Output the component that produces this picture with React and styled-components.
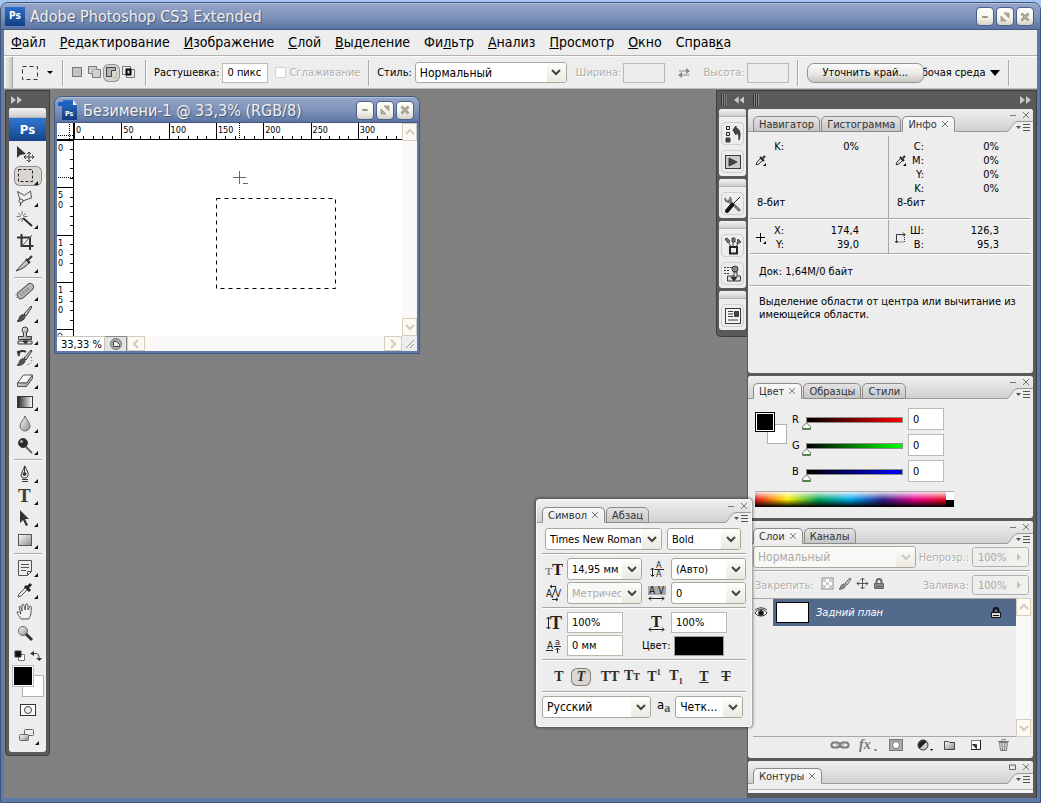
import React, { useState } from "react";
import styled, { createGlobalStyle, css } from "styled-components";

const sans = `"DejaVu Sans Condensed", "DejaVu Sans", sans-serif`;
const serif = `"Liberation Serif", serif`;

const GlobalStyle = createGlobalStyle`
  * {
    box-sizing: border-box;
  }
  body {
    margin: 0;
    font-family: ${sans};
    font-size: 11px;
    color: #000;
  }
  button, input, select {
    font: inherit;
    color: inherit;
    margin: 0;
  }
  button {
    padding: 0;
    border: 0;
    background: none;
  }
`;

/* ---------- window frame ---------- */

const Desktop = styled.div`
  min-height: 100vh;
  display: flex;
  flex-direction: column;
  padding-top: 2px;
  background: #a6c4ec;
`;

const Frame = styled.div`
  flex: 1;
  display: flex;
  flex-direction: column;
  padding: 0 3px 4px;
  border: 1px solid #3f5580;
  border-radius: 8px 8px 0 0;
  background: #5e78a8;
`;

const TitleBar = styled.header`
  display: flex;
  align-items: center;
  height: 27px;
  margin: 0 -3px;
  padding: 0 6px 0 4px;
  border-top: 1px solid #b4c2da;
  border-bottom: 1px solid #43597f;
  border-radius: 7px 7px 0 0;
  background: linear-gradient(#93a5c6, #8094ba 50%, #5b74a3);
`;

const Title = styled.h1`
  flex: 1;
  margin: 0 0 0 5px;
  font-size: 16px;
  font-weight: normal;
  white-space: nowrap;
  color: #f3f1ea;
  text-shadow: 1px 1px 1px #3f5580;
`;

const WindowButtons = styled.div`
  display: flex;
  gap: 2px;
`;

const WindowButton = styled.button`
  display: flex;
  align-items: center;
  justify-content: center;
  width: 18px;
  height: 19px;
  border: 1px solid #4a6190;
  border-radius: 4px;
  background: linear-gradient(#fffffb, #f3f2ea 60%, #d5d2c6);
`;

const MenuBar = styled.nav`
  display: flex;
  align-items: center;
  gap: 14px;
  height: 26px;
  padding: 0 7px 2px;
  border-bottom: 1px solid #b3b2ae;
  background: #ededed;
`;

const MenuItem = styled.button`
  font-size: 14px;
  line-height: 20px;
  white-space: nowrap;
`;

/* ---------- options bar ---------- */

const OptionsBar = styled.div`
  display: flex;
  align-items: center;
  height: 33px;
  border-top: 1px solid #fafafa;
  border-bottom: 1px solid #bdbdbb;
  background: #ededed;
  white-space: nowrap;
`;

const Grip = styled.div`
  align-self: stretch;
  width: 9px;
  margin-right: 6px;
  border-right: 1px solid #a5a5a2;
  background: linear-gradient(90deg, #f4f4f4, #c9c9c7);
`;

const BarDivider = styled.div`
  width: 2px;
  height: 26px;
  margin: 0 ${(p) => p.$after || 8}px 0 ${(p) => p.$before || 8}px;
  border-left: 1px solid #a9a9a3;
  border-right: 1px solid #fafafa;
`;

const ModeGroup = styled.div`
  display: flex;
`;

const BarIcon = styled.button`
  display: flex;
  align-items: center;
  justify-content: center;
  height: 18px;
  width: ${(p) => p.$width || 17}px;
  border-radius: 6px;
  ${(p) =>
    p.$pressed &&
    css`
      background: #d8d5d0;
      box-shadow: inset 0 0 0 1px #94918c;
    `}
`;

const FieldLabel = styled.label`
  margin-right: ${(p) => p.$gap || 3}px;
  white-space: nowrap;
  ${(p) =>
    p.$off &&
    css`
      color: #b0afab;
      text-shadow: 1px 1px 0 #fff;
    `}
`;

const Field = styled.input`
  width: ${(p) => p.$width || 56}px;
  height: ${(p) => p.$height || 21}px;
  padding: 0 4px;
  border: 1px solid #bcb9ad;
  border-radius: 0;
  background: #fff;
  outline: none;
  &:disabled {
    background: #ededed;
    color: #aaa9a5;
  }
`;

const Check = styled.input`
  appearance: none;
  width: 11px;
  height: 11px;
  margin: 0 3px 0 7px;
  border: 1px solid #d6d4ca;
  background: #fff;
`;

const SelectBox = styled.span`
  position: relative;
  display: block;
  flex: none;
  width: ${(p) => p.$width}px;
  margin-right: ${(p) => p.$after || 0}px;
`;

const SelectInput = styled.select`
  appearance: none;
  display: block;
  width: 100%;
  height: ${(p) => p.$height || 22}px;
  padding: 0 20px 0 4px;
  border: 1px solid #aaa79b;
  border-radius: 3px;
  background: #fff;
  font-size: ${(p) => (p.$large ? 12 : 11)}px;
  outline: none;
  opacity: 1;
  &:disabled {
    color: #aaa9a5;
    background: #f8f8f7;
  }
`;

const SelectArrow = styled.span`
  position: absolute;
  top: 1px;
  right: 1px;
  bottom: 1px;
  width: 19px;
  display: flex;
  align-items: center;
  justify-content: center;
  border-radius: 0 2px 2px 0;
  background: linear-gradient(#fdfdfb, #ebe9e0);
  pointer-events: none;
`;

const RefineButton = styled.button`
  position: relative;
  z-index: 1;
  width: 117px;
  height: 20px;
  border: 1px solid #96948e;
  border-radius: 7px;
  background: linear-gradient(#fbfbfa, #e9e8e5 55%, #c9c6c0);
`;

const WorkspaceMenu = styled.button`
  display: flex;
  align-items: center;
  gap: 4px;
  margin-left: -2px;
`;

/* ---------- workspace and docks ---------- */

const Workspace = styled.main`
  flex: 1;
  position: relative;
  display: flex;
  align-items: flex-start;
  padding-top: 1px;
  background: #808080;
`;

const Spacer = styled.div`
  flex: 1;
`;

const Toolbox = styled.aside`
  width: 45px;
  margin-left: 1px;
  padding: 0 3px 3px;
  border: 1px solid #3e3e3e;
  border-radius: 0 0 4px 4px;
  background: #5a5a5a;
`;

const DockHeader = styled.div`
  display: flex;
  align-items: center;
  gap: 6px;
  height: ${(p) => p.$height || 18}px;
  padding: 0 2px;
`;

const ToolPanel = styled.div`
  display: flex;
  flex-direction: column;
  align-items: center;
  padding-bottom: 5px;
  border-radius: 3px;
  background: #ededed;
`;

const StripHandle = styled.div`
  align-self: stretch;
  height: ${(p) => p.$height || 8}px;
  border-radius: 3px 3px 0 0;
  border-bottom: 1px solid #b5b5b5;
  background: linear-gradient(#f3f3f3, #cdcdcd);
`;

const PsBadge = styled.div`
  align-self: stretch;
  height: 23px;
  margin: 0 0 2px;
  background: linear-gradient(#2e76d2, #174489);
  color: #fff;
  font: bold 13px/23px ${sans};
  text-align: center;
`;

const ToolButton = styled.button`
  display: flex;
  align-items: center;
  justify-content: center;
  width: 28px;
  height: 22px;
  border-radius: 6px;
  ${(p) =>
    p.$pressed &&
    css`
      height: 20px;
      margin: 1px 0;
      background: #d9d6d1;
      box-shadow: inset 0 0 0 1px #8f8c88;
    `}
`;

const ToolDivider = styled.div`
  width: 28px;
  height: 2px;
  margin: 2px 0;
  border-top: 1px solid #a9a9a5;
  border-bottom: 1px solid #fff;
`;

const MiniRow = styled.div`
  display: flex;
  justify-content: space-between;
  width: 28px;
  height: 18px;
  align-items: center;
  margin-top: 2px;
`;

const ModeButtons = styled.div`
  display: grid;
  gap: 4px;
  padding-top: 2px;
`;

/* two overlapping squares: step is the offset, overlap the shared part */
const SwatchPair = styled.div`
  display: grid;
  grid-template: ${(p) => {
    const tracks = `${p.$step}px ${p.$overlap}px ${p.$step}px`;
    return `${tracks} / ${tracks}`;
  }};
`;

const Swatch = styled.button`
  background: ${(p) => p.$color};
  ${(p) =>
    p.$front
      ? css`
          grid-area: 1 / 1 / 3 / 3;
          z-index: 1;
          border: 1px solid ${p.$edge};
          box-shadow: inset 0 0 0 1px #fff;
        `
      : css`
          grid-area: 2 / 2 / 4 / 4;
          border: 1px solid #b0b0b0;
        `}
`;

const IconDock = styled.aside`
  width: 31px;
  padding: 0 1px 3px 2px;
  border: 1px solid #3e3e3e;
  border-right: 0;
  border-radius: 0 0 0 5px;
  background: #5a5a5a;
`;

const IconGroup = styled.div`
  display: flex;
  flex-direction: column;
  align-items: center;
  gap: 5px;
  margin-bottom: 3px;
  padding-bottom: 3px;
  border-radius: 3px;
  background: #ededed;
`;

const DockButton = styled.button`
  display: flex;
  align-items: center;
  justify-content: center;
  width: 23px;
  height: 23px;
  border: 1px solid #cfcfcf;
  border-radius: 4px;
`;

const PanelDock = styled.aside`
  align-self: stretch;
  display: flex;
  flex-direction: column;
  gap: 3px;
  width: 290px;
  padding: 0 3px 5px 1px;
  border-top: 1px solid #3e3e3e;
  border-right: 1px solid #3e3e3e;
  background: #5a5a5a;
`;

const PanelDockHeader = styled(DockHeader)`
  justify-content: space-between;
  margin-bottom: -3px;
  padding: 0 2px 0 5px;
`;

/* ---------- palettes ---------- */

const Panel = styled.section`
  display: flex;
  flex-direction: column;
  flex: ${(p) => (p.$grow ? 1 : "none")};
  border-radius: 3px;
  background: #ededed;
`;

const TabStrip = styled.div`
  display: flex;
  align-items: flex-end;
  height: 23px;
  padding-left: 5px;
  border-radius: 3px 3px 0 0;
  background: linear-gradient(#f0f0f0, #cfcfcf);
  box-shadow: inset 0 -1px 0 #9a9a9a;
`;

const Tab = styled.button`
  display: flex;
  align-items: center;
  gap: 4px;
  height: 16px;
  margin-right: 1px;
  padding: 0 5px;
  border: 1px solid #8b8b8b;
  border-radius: 5px 5px 0 0;
  white-space: nowrap;
  color: #333;
  background: linear-gradient(#e4e4e4, #c6c6c6);
  ${(p) =>
    p.$active &&
    css`
      border-bottom-color: #ededed;
      background: linear-gradient(#f8f8f8, #ededed);
    `}
`;

const PanelControls = styled.div`
  display: flex;
  flex-direction: column;
  align-items: flex-end;
  margin-left: auto;
`;

const PanelButtons = styled.div`
  display: flex;
  gap: 5px;
  height: 12px;
  padding-right: 3px;
`;

const Rule = styled.div`
  height: 2px;
  margin: 0 ${(p) => p.$inset || 2}px;
  border-top: 1px solid #a9a79f;
  border-bottom: 1px solid #fff;
`;

const InfoBody = styled.div`
  min-height: 241px;
  padding-top: 4px;
`;

const InfoPair = styled.div`
  display: grid;
  grid-template-columns: 140px 1fr;
  height: ${(p) => p.$height}px;
`;

const InfoCell = styled.div`
  display: grid;
  grid-template-columns: 17px 12px 75px;
  grid-auto-rows: 14px;
  padding: 4px 0 0 7px;
  line-height: 14px;
  text-align: right;
  & + & {
    padding-left: 6px;
    border-left: 1px solid #a9a79f;
  }
`;

const InfoIcon = styled.span`
  grid-column: 1;
  grid-row: ${(p) => p.$row} / span 2;
  display: flex;
  align-items: ${(p) => (p.$row > 1 ? "flex-start" : "center")};
`;

const InfoKey = styled.span`
  grid-column: 2;
  display: flex;
  justify-content: flex-end;
  white-space: nowrap;
`;

const InfoValue = styled.span`
  grid-column: 3;
`;

const InfoDepth = styled.span`
  grid-column: 1 / 4;
  grid-row: 5;
  padding-left: 2px;
  text-align: left;
`;

const InfoText = styled.p`
  margin: 0;
  padding: ${(p) => p.$top}px 11px 7px;
  line-height: 13px;
`;

const ColorBody = styled.div`
  display: flex;
  flex-direction: column;
  min-height: 119px;
  padding: 9px 7px 0;
`;

const ColorTop = styled.div`
  display: flex;
  gap: 5px;
`;

const ColorSwatches = styled(SwatchPair)`
  padding-top: 4px;
`;

const SliderList = styled.div`
  display: grid;
  gap: 4px;
`;

const SliderRow = styled.div`
  display: grid;
  grid-template-columns: 9px 107px 36px;
  align-items: center;
  height: 22px;
`;

const Slider = styled.input`
  appearance: none;
  width: 97px;
  height: 18px;
  margin: 1px 0 0 5px;
  background: none;
  &::-webkit-slider-runnable-track {
    height: 6px;
    border: 1px solid #8e8e86;
    background: linear-gradient(90deg, #000, ${(p) => p.$hue});
  }
  &::-webkit-slider-thumb {
    appearance: none;
    width: 9px;
    height: 8px;
    margin: 4px 0 0 -5px;
    background: url("data:image/svg+xml,%3Csvg xmlns='http://www.w3.org/2000/svg' width='9' height='8'%3E%3Cpath d='M4.5 .8L8.5 5v2.5h-8V5z' fill='%23fff' stroke='%23707070'/%3E%3Cpath d='M1 6.500h7' fill='none' stroke='%2322a022'/%3E%3C/svg%3E");
  }
`;

const Spectrum = styled.div`
  display: grid;
  grid-template-columns: 1fr 8px;
  width: 199px;
  height: 16px;
  margin-top: 9px;
  border-top: 1px solid #aaa;
`;

const Hues = styled.div`
  background: linear-gradient(
      rgba(255, 255, 255, 0.85),
      rgba(255, 255, 255, 0) 50%,
      rgba(0, 0, 0, 0) 50%,
      #000
    ),
    linear-gradient(90deg, #e8121c, #fff000 17%, #00a050 33%, #00a8f0 50%, #30208c 67%, #e80088 84%, #e8121c);
`;

const BlackWhite = styled.div`
  background: linear-gradient(#fff 50%, #000 50%);
`;

const LayersBody = styled.div`
  flex: 1;
  display: flex;
  flex-direction: column;
  padding: 0 2px 4px 5px;
`;

const LayerOptions = styled.div`
  display: flex;
  align-items: center;
  justify-content: space-between;
  height: 26px;
`;

const LockGroup = styled.div`
  display: flex;
  align-items: center;
  gap: 4px;
  padding-left: 2px;
`;

const Cluster = styled.div`
  display: flex;
  align-items: center;
`;

const Percent = styled.span`
  display: flex;
  width: 57px;
  margin-right: 2px;
  height: 20px;
  border: 1px solid #b5b3a9;
  border-radius: 3px;
  overflow: hidden;
`;

const PercentInput = styled.input`
  flex: 1;
  min-width: 0;
  padding: 0 0 0 5px;
  border: 0;
  background: #ededed;
  &:disabled {
    color: #aaa9a5;
  }
`;

const PercentButton = styled.button`
  display: flex;
  align-items: center;
  justify-content: center;
  width: 19px;
  background: #f2f1ee;
`;

const LayerArea = styled.div`
  flex: 1;
  display: grid;
  grid-template-columns: 1fr 15px;
`;

const LayerList = styled.ul`
  margin: 0;
  padding: 0;
  list-style: none;
  border-top: 1px solid #a9a79f;
  border-bottom: 1px solid #a9a79f;
`;

const Layer = styled.li`
  display: flex;
  align-items: center;
  height: 27px;
  padding-right: 14px;
  background: #536a8d;
  color: #fff;
`;

const EyeCell = styled.button`
  display: flex;
  align-items: center;
  align-self: stretch;
  width: 20px;
  padding-left: 1px;
  background: #ededed;
`;

const Thumb = styled.span`
  width: 33px;
  height: 21px;
  margin: 0 7px 0 3px;
  border: 1px solid #000;
  background: #fff;
`;

const LayerName = styled.span`
  flex: 1;
  font-style: italic;
`;

const LayerFooter = styled.div`
  display: flex;
  align-items: center;
  justify-content: flex-end;
  gap: 8px;
  height: 17px;
  padding: 2px 18px 0 0;
`;

const ScrollColumn = styled.div`
  display: flex;
  flex-direction: column;
  justify-content: space-between;
  background: #fbf9f8;
`;

const ScrollRow = styled.div`
  flex: 1;
  display: flex;
  justify-content: space-between;
  background: #fbf9f8;
`;

const ScrollButton = styled.button`
  display: flex;
  align-items: center;
  justify-content: center;
  width: ${(p) => (p.$wide ? 18 : 15)}px;
  height: ${(p) => (p.$wide ? 15 : 18)}px;
  border: 1px solid #d5ceba;
  background: #fdfaf3;
`;

const PathsBody = styled.div`
  height: 9px;
  border-top: 5px solid #ededed;
  border-bottom: 3px solid #f4f4f4;
  background: #b5b5b5;
`;

/* ---------- character palette ---------- */

const FloatingPanel = styled(Panel)`
  position: absolute;
  right: 285px;
  top: 410px;
  z-index: 3;
  width: 216px;
  padding-bottom: 8px;
  border: 1px solid #f8f8f8;
  box-shadow: 0 0 3px 1px rgba(0, 0, 0, 0.45);
`;

const CharBody = styled.div`
  display: flex;
  flex-direction: column;
  gap: 3px;
  padding: 5px 3px 0;
`;

const CharRow = styled.div`
  display: flex;
  gap: ${(p) => p.$gap || 5}px;
  padding: 0 ${(p) => p.$pad || 2}px 0 ${(p) => p.$pad || 5}px;
`;

const CharGrid = styled.div`
  display: grid;
  grid-template-columns: 27px 75px 29px 75px;
  gap: 2px 0;
  align-items: center;
`;

const CharIcon = styled.span`
  display: flex;
  justify-content: center;
`;

const TextColor = styled.button`
  width: 54px;
  height: 20px;
  border: 1px solid #a0a0a0;
  background: #000;
`;

const ColorCell = styled.div`
  grid-column: 3 / 5;
  display: flex;
  align-items: center;
  justify-content: flex-end;
  gap: 3px;
  padding-right: 22px;
`;

const StyleRow = styled.div`
  display: flex;
  align-items: center;
  height: 24px;
  padding: 1px 0 0 9px;
`;

const StyleButton = styled.button`
  width: 20px;
  height: 18px;
  margin-right: ${(p) => p.$after || 2}px;
  border-radius: 6px;
  font: bold 14px/16px ${serif};
  color: #2c2c2c;
  text-decoration: ${(p) => p.$line || "none"};
  ${(p) =>
    p.$italic &&
    css`
      font-style: italic;
      background: #dad7d2;
      box-shadow: inset 0 0 0 1px #84817c;
    `}
  small {
    font-size: 10px;
  }
  sup, sub {
    font-size: 8px;
    line-height: 8px;
  }
`;

const AntiAlias = styled.label`
  padding: 0 1px 0 2px;
  font-size: 13px;
  line-height: 18px;
  sub {
    font: bold 12px/12px ${serif};
    color: #555;
    vertical-align: -3px;
  }
`;

/* ---------- document window ---------- */

const DocWindow = styled.section`
  position: absolute;
  left: 50px;
  top: 7px;
  width: 366px;
  padding: 0 2px 2px;
  border: 1px solid #43597f;
  border-radius: 8px 8px 0 0;
  background: #5e78a8;
`;

const DocTitleBar = styled(TitleBar)`
  height: 26px;
  margin: 0 -2px;
  padding: 0 5px 0 3px;
`;

const DocGrid = styled.div`
  display: grid;
  grid-template-columns: 17px 1fr 15px;
  grid-template-rows: 17px 196px 15px;
  background: #fff;
`;

const Artboard = styled.div`
  background: #fff;
  svg {
    display: block;
  }
`;

const DocScroll = styled(ScrollColumn)`
  grid-column: 3;
  grid-row: 1 / 3;
`;

const DocStatus = styled.div`
  grid-column: 1 / 3;
  display: flex;
`;

const Zoom = styled.input`
  width: 48px;
  height: 15px;
  padding: 0 0 0 4px;
  border: 1px solid #c6c4ba;
  border-width: 1px 1px 0 0;
  outline: none;
`;

const StatusButton = styled.button`
  display: flex;
  align-items: center;
  justify-content: center;
  width: 22px;
  border: 1px solid #8a8a8a;
  border-width: 1px 1px 0 0;
  background: #e3e3e3;
`;

/* ---------- drawings ---------- */

const Defs = styled.svg`
  position: absolute;
`;

const Metal = () => (
  <Defs width="0" height="0" aria-hidden="true">
    <defs>
      <linearGradient id="metal" x1="0" y1="0" x2="1" y2="1">
        <stop offset="0" stopColor="#fff" />
        <stop offset="1" stopColor="#8a8a8a" />
      </linearGradient>
      <linearGradient id="ramp">
        <stop offset="0" stopColor="#222" />
        <stop offset="1" stopColor="#fff" />
      </linearGradient>
      <linearGradient id="blue" x2="0" y2="1">
        <stop offset="0" stopColor="#2a6fc9" />
        <stop offset="1" stopColor="#123f83" />
      </linearGradient>
    </defs>
  </Defs>
);

const Svg = ({ w = 16, h = 16, children }) => (
  <svg width={w} height={h} viewBox={`0 0 ${w} ${h}`} fill="none" stroke="#3a3a3a" aria-hidden="true">
    {children}
  </svg>
);

const PsIcon = () => (
  <Svg w={20} h={20}>
    <rect width="20" height="19" fill="url(#blue)" stroke="none" />
    <text x="4" y="12" fontSize="10" fontWeight="bold" fill="#fff" stroke="none">Ps</text>
  </Svg>
);

const PsDocIcon = () => (
  <Svg w={20} h={20}>
    <path d="M5 0h10l4 5v15H4V6H0V2h5z" fill="url(#blue)" stroke="none" />
    <path d="M15 0v5h4z" fill="#fff" stroke="none" />
    <path d="M0 2h12v4H0z" fill="#1660c8" stroke="none" />
    <text x="7" y="16" fontSize="7" fontWeight="bold" fill="#fff" stroke="none">Ps</text>
  </Svg>
);

const Minimize = () => (
  <Svg w={10} h={10}><path d="M2.500 4.500h5v1h-5z" fill="#b5b09c" stroke="#9a9684" /></Svg>
);
const Maximize = () => (
  <Svg w={10} h={10}>
    <path d="M4 1h5v5zM1 4v5h5z" fill="#b0ac9a" stroke="#a5a18f" />
  </Svg>
);
const Close = () => (
  <Svg w={10} h={10}>
    <path d="M1.500 1.500l7 7M8.500 1.500l-7 7" stroke="#9a9684" strokeWidth="2.500" />
    <path d="M2 2l6 6M8 2l-6 6" stroke="#b9b5a4" />
  </Svg>
);

const Chevron = ({ color = "#444" }) => (
  <Svg w={10} h={7}><path d="M1 1l4 4 4-4" stroke={color} strokeWidth="2" /></Svg>
);

const ScrollArrow = ({ d }) => (
  <Svg w={10} h={10}><path d={d} stroke="#cfcbc0" strokeWidth="2" /></Svg>
);
const up = "M1 7l4-4 4 4";
const down = "M1 3l4 4 4-4";

const DoubleArrow = ({ left }) => (
  <Svg w={11} h={8}>
    <path d={left ? "M5 0v8L0 4zM11 0v8L6 4z" : "M0 0v8l5-4zM6 0v8l5-4z"} fill="#c8c8c8" stroke="none" />
  </Svg>
);

const DockGrip = () => (
  <Svg w={7} h={12}>
    <path d="M.5 0v12M2.500 0v12M4.500 0v12" stroke="#2c2c2c" />
    <path d="M1.500 0v12M3.500 0v12M5.500 0v12" stroke="#8c8c8c" />
  </Svg>
);

const SmallX = () => (
  <Svg w={8} h={8}><path d="M1 1l6 6M7 1l-6 6" stroke="#777" /></Svg>
);

const tools = {
  move: (
    <>
      <path d="M2 2v12l3-3 6-1z" fill="#333" stroke="none" />
      <path d="M14 8v10M9 13h10M12 10l2-2 2 2M12 16l2 2 2-2M11 11l-2 2 2 2M17 11l2 2-2 2" />
    </>
  ),
  marquee: <rect x="3.500" y="3.500" width="14" height="12" strokeDasharray="3 2" stroke="#222" />,
  lasso: (
    <>
      <path d="M5 12L2.500 3.500l7 4 6-4.500 1 7-9 3" stroke="#555" />
      <circle cx="6" cy="13" r="2" stroke="#555" />
      <path d="M6 15l-1 3" stroke="#333" />
    </>
  ),
  wand: (
    <>
      <path d="M7 1v11M1.500 6.500h11M3 3l8 8M11 3l-8 8" stroke="#777" />
      <path d="M8 8l9 8" stroke="#2c2c2c" strokeWidth="2" />
      <circle cx="7" cy="6.500" r="1.500" fill="#fff" stroke="none" />
    </>
  ),
  crop: (
    <>
      <path d="M6.500 2v12h12M2 5.500h13V18" stroke="#333" strokeWidth="2" />
      <path d="M7 14L17 3" stroke="#555" />
    </>
  ),
  slice: (
    <>
      <path d="M1 17L11 6l3 3c-3 4-7 6-13 8z" fill="url(#metal)" stroke="#444" />
      <path d="M11 5l4 4M12 7l5-5" stroke="#333" strokeWidth="2" />
    </>
  ),
  heal: (
    <>
      <circle cx="5" cy="13" r="4" strokeDasharray="1 2" />
      <path d="M6 13L15 5" stroke="#555" strokeWidth="8" strokeLinecap="round" />
      <path d="M6 13L15 5" stroke="#bbb" strokeWidth="6" strokeLinecap="round" />
      <path d="M6 13L15 5" stroke="#777" strokeWidth="3" strokeDasharray="1 2" />
    </>
  ),
  brush: (
    <>
      <path d="M9 10l7-8 1 1-6 9z" fill="url(#metal)" />
      <path d="M2 17c3 0 1-5 5-6 3-1 4 2 2 4s-5 3-7 2z" fill="#555" stroke="#333" />
    </>
  ),
  stamp: (
    <>
      <circle cx="10" cy="4" r="3" fill="url(#metal)" />
      <path d="M8.500 6.500v4h-5v3h13v-3h-5v-4" fill="url(#metal)" />
      <path d="M3 15h14v3H3z" fill="#ddd" />
      <path d="M8 15h5l-2.500 3z" fill="#222" />
    </>
  ),
  history: (
    <>
      <path d="M9 10l7-8 1 1-6 9z" fill="url(#metal)" />
      <path d="M2 17c3 0 1-5 5-6 3-1 4 2 2 4s-5 3-7 2z" fill="#555" />
      <path d="M11 4c-3-2-7-1-7 2M7 3L3 4l1 4" stroke="#333" strokeWidth="2" />
      <path d="M16 9c2 4 0 7-4 8" strokeDasharray="1 2" />
    </>
  ),
  eraser: (
    <>
      <path d="M2.500 13l6-8h9l-6 8z" fill="#f6f6f6" stroke="#555" />
      <path d="M2.500 13v3.500h9l6-8V5l-6 8z" fill="url(#metal)" stroke="#555" />
    </>
  ),
  gradient: <rect x="2.500" y="4.500" width="15" height="11" fill="url(#ramp)" />,
  blur: <path d="M10 2c1 4 5 6 5 10a5 5 0 0 1-10 0c0-4 4-6 5-10z" fill="url(#metal)" stroke="#666" />,
  dodge: (
    <>
      <path d="M10 10l7 7" stroke="#666" strokeWidth="2" />
      <circle cx="8" cy="7" r="4.500" fill="#2a2a2a" />
      <circle cx="6.500" cy="5.500" r="1.500" fill="#aaa" stroke="none" />
    </>
  ),
  pen: (
    <>
      <path d="M10 2c1 4 4 6 3 10l-2 2H8l-2-2C6 8 9 6 9.500 2z" fill="#eee" />
      <path d="M9.500 3v6M7 15.500h6M7 17.500h6" />
      <circle cx="9.500" cy="10" r="1.500" fill="#333" />
    </>
  ),
  type: <text x="3" y="16" fontFamily="Liberation Serif" fontWeight="bold" fontSize="19" fill="#3c3c3c" stroke="none">T</text>,
  select: <path d="M5 2v13l3-3 3 6 2-1-3-6h4z" fill="#333" stroke="none" />,
  shape: <rect x="3.500" y="4.500" width="13" height="11" fill="url(#metal)" stroke="#555" />,
  notes: (
    <>
      <path d="M3.500 2.500h13v11l-4 4h-9z" fill="#ececec" stroke="#555" />
      <path d="M6 6.500h8M6 9.500h8M6 12.500h5M12.500 17.500v-4h4" stroke="#555" />
    </>
  ),
  eyedropper: (
    <>
      <path d="M3 17l1-3 7-7 2 2-7 7z" fill="#eee" stroke="#555" />
      <path d="M10 6l5 5M13 7l3-3" stroke="#222" strokeWidth="3" />
    </>
  ),
  hand: (
    <path
      d="M6 17c-1-2-4-5-4-7 1-1 2 0 4 2L4 5c1-2 2 0 3 4L7 3c1-2 2-1 3 5l1-6c2-1 2 1 2 6l2-4c2 0 1 3 1 7 0 3-2 4-2 6z"
      fill="#f1f1f1"
      stroke="#555"
    />
  ),
  zoom: (
    <>
      <circle cx="8" cy="7" r="4.500" fill="url(#metal)" stroke="#666" />
      <path d="M11 10l6 6" stroke="#333" strokeWidth="3" />
    </>
  ),
};

const toolGroups = [
  ["move", "marquee", "lasso", "wand", "crop", "slice"],
  ["heal", "brush", "stamp", "history", "eraser", "gradient", "blur", "dodge"],
  ["pen", "type", "select", "shape"],
  ["notes", "eyedropper", "hand", "zoom"],
];
const noFlyout = ["move", "crop", "hand", "zoom"];

const Tool = ({ name, pressed, onClick }) => (
  <ToolButton $pressed={pressed} aria-label={name} onClick={onClick}>
    <svg width="26" height="20" viewBox="0 0 26 20" fill="none" stroke="#3a3a3a">
      {tools[name]}
      {!noFlyout.includes(name) && <path d="M23 15v4h-4z" fill="#111" stroke="none" />}
    </svg>
  </ToolButton>
);

const modes = [
  <rect key="a" x="2.500" y="2.500" width="9" height="9" fill="#c2c2c2" stroke="#777" />,
  <g key="b" stroke="#777">
    <path d="M1.500 1.500h8v3h4v8h-8v-4h-4z" fill="#d0d0d0" />
    <path d="M5.500 8.500v-4h4" stroke="#aaa" />
  </g>,
  <g key="c" stroke="#444">
    <path d="M2.500 2.500h9v3h-4v6h-5z" fill="#b4b4b4" />
    <path d="M12.500 6.500v6h-4" stroke="#bdbab5" />
  </g>,
  <g key="d" stroke="#777">
    <path d="M1.500 1.500h8v8h-8zM5.500 4.500h8v8h-8z" />
    <path d="M5.500 4.500h4v5h-4z" fill="#ccc" stroke="#000" strokeWidth="2" />
  </g>,
];

const Dropper = () => (
  <Svg w={12} h={12}>
    <path d="M1 11l1-3 4-4 2 2-4 4z" fill="#ddd" />
    <path d="M5 3l4 4M8 4l2-2" stroke="#222" strokeWidth="2" />
    <path d="M11 9v3H8z" fill="#000" stroke="none" />
  </Svg>
);

const dockIcons = {
  history: (
    <>
      <path d="M2.500 1.500h3v3h-3zM2.500 7.500h3v3h-3z" stroke="#222" />
      <path d="M2 13h4v4H2z" fill="#444" />
      <path d="M9 5l3-4v2c4 1 5 6 3 12 0-5-1-7-3-7v2z" fill="#444" stroke="#333" />
    </>
  ),
  actions: (
    <>
      <rect x="1.500" y="2.500" width="15" height="13" fill="#ccc" />
      <path d="M5 5l8 4-8 4z" fill="#444" />
    </>
  ),
  presets: (
    <>
      <path d="M4 5l6 5 6 6" stroke="#777" strokeWidth="3" />
      <path d="M1 3l1 3 3 1 2-2-1-3" stroke="#777" strokeWidth="2" />
      <path d="M16 2l-7 7" stroke="#222" />
      <path d="M8 10l-5 6" stroke="#111" strokeWidth="4" strokeLinecap="round" />
    </>
  ),
  brushes: (
    <>
      <path d="M7 10L4 4M9 10V4M12 10l3-6" stroke="#444" />
      <path d="M1 2l3 4 2-2-3-3zM14 2l3 3-4 2zM8 1h3v4H8z" stroke="#444" fill="#777" />
      <path d="M6 10h7v6.500H6z" fill="#eee" stroke="#222" strokeWidth="2" />
    </>
  ),
  clone: (
    <>
      <path d="M0 2.500h8M0 5.500h6M0 8.500h5" strokeDasharray="2 1" />
      <circle cx="11" cy="4" r="3" fill="#888" />
      <path d="M10 7v4H3.500v5h13v-5H13V7z" fill="#ddd" />
      <path d="M7 12h6l-3 4z" fill="#222" />
    </>
  ),
  comps: (
    <>
      <rect x="1.500" y="1.500" width="15" height="15" fill="#f4f4f4" />
      <path d="M4 4.500h5M4 7h5M4 9.500h5M4 13h10" />
      <path d="M10.500 4.500h4v5h-4z" fill="#444" />
    </>
  ),
};

/* ---------- shared pieces ---------- */

const Select = ({ width, height, label, options, disabled, id, after, large }) => (
  <SelectBox $width={width} $after={after}>
    <SelectInput id={id} aria-label={label} disabled={!!disabled} $height={height} $large={large}>
      {options.map((o) => (
        <option key={o}>{o}</option>
      ))}
    </SelectInput>
    <SelectArrow>
      <Chevron color={disabled === "all" ? "#c9c8c3" : "#444"} />
    </SelectArrow>
  </SelectBox>
);

const MenuCorner = styled.svg`
  display: block;
`;

const Tabs = ({ names, active, restore }) => (
  <TabStrip>
    {names.map((name) => (
      <Tab key={name} $active={name === active}>
        {name}
        {name === active && <SmallX />}
      </Tab>
    ))}
    <PanelControls>
      <PanelButtons>
        <button aria-label="Свернуть">
          <Svg w={8} h={8}>
            {restore ? (
              <path d="M.5 2v4.500h6V2M0 2h7" stroke="#666" />
            ) : (
              <path d="M1 4.500h6" stroke="#777" />
            )}
          </Svg>
        </button>
        <button aria-label="Закрыть"><SmallX /></button>
      </PanelButtons>
      <button aria-label="Меню палитры">
        <MenuCorner width="27" height="11" viewBox="0 0 27 11" fill="none">
          <path d="M0 11c5 0 5-10 12-10.500h15V11z" fill="#ededed" />
          <path d="M0 10.500c5 0 6-10 12-10h15" stroke="#9a9a9a" />
          <path d="M10 5h5l-2.500 3z" fill="#555" />
          <path d="M17 3.500h7M17 6.500h7M17 9.500h7" stroke="#555" />
        </MenuCorner>
      </button>
    </PanelControls>
  </TabStrip>
);

const menu = ["_Файл", "_Редактирование", "_Изображение", "_Слой", "_Выделение", "Фи_льтр", "_Анализ", "_Просмотр", "_Окно", "Справ_ка"];

const MenuLabel = ({ text }) => {
  const at = text.indexOf("_");
  return (
    <MenuItem>
      {text.slice(0, at)}
      <u>{text[at + 1]}</u>
      {text.slice(at + 2)}
    </MenuItem>
  );
};

const WindowControls = () => (
  <WindowButtons>
    <WindowButton aria-label="Свернуть"><Minimize /></WindowButton>
    <WindowButton aria-label="Развернуть"><Maximize /></WindowButton>
    <WindowButton aria-label="Закрыть"><Close /></WindowButton>
  </WindowButtons>
);

const Options = () => (
  <OptionsBar>
    <Grip />
    <BarIcon $width={22} aria-label="Прямоугольная область">
      <Svg w={18} h={16}><rect x="1.500" y="1.500" width="15" height="13" strokeDasharray="4 3" stroke="#333" /></Svg>
    </BarIcon>
    <BarIcon $width={18} aria-label="Наборы параметров">
      <Svg w={6} h={4}><path d="M0 0h6L3 3z" fill="#000" stroke="none" /></Svg>
    </BarIcon>
    <BarDivider $before={3} $after={5} />
    <ModeGroup>
      {modes.map((icon, i) => (
        <BarIcon key={i} $pressed={i === 2} aria-label={"Режим выделения " + (i + 1)}>
          <Svg w={15} h={15}>{icon}</Svg>
        </BarIcon>
      ))}
    </ModeGroup>
    <BarDivider $after={7} />
    <FieldLabel htmlFor="feather">Растушевка:</FieldLabel>
    <Field id="feather" defaultValue="0 пикс" $width={46} $height={20} />
    <Check type="checkbox" id="smooth" disabled />
    <FieldLabel htmlFor="smooth" $off>Сглаживание</FieldLabel>
    <BarDivider $before={5} $after={7} />
    <FieldLabel htmlFor="style">Стиль:</FieldLabel>
    <Select id="style" width={152} height={21} after={9} options={["Нормальный"]} large />
    <FieldLabel htmlFor="w" $off $gap={2}>Ширина:</FieldLabel>
    <Field id="w" disabled $width={42} $height={20} />
    <BarIcon $width={38} aria-label="Поменять местами">
      <Svg w={12} h={10}>
        <path d="M1 3h8M3 7h8" stroke="#888" />
        <path d="M8 0l4 3-4 3zM4 4L0 7l4 3z" fill="#888" stroke="none" />
      </Svg>
    </BarIcon>
    <FieldLabel htmlFor="h" $off $gap={2}>Высота:</FieldLabel>
    <Field id="h" disabled $width={42} $height={20} />
    <BarDivider />
    <RefineButton>Уточнить край...</RefineButton>
    <WorkspaceMenu>
      бочая среда
      <Svg w={10} h={6}><path d="M0 0h10L5 6z" fill="#000" stroke="none" /></Svg>
    </WorkspaceMenu>
    <BarDivider />
  </OptionsBar>
);

const ToolBar = () => {
  const [tool, setTool] = useState("marquee");
  return (
    <Toolbox>
      <DockHeader $height={17}><DoubleArrow /></DockHeader>
      <ToolPanel>
        <StripHandle $height={10} />
        <PsBadge>Ps</PsBadge>
        {toolGroups.map((group, i) => (
          <React.Fragment key={i}>
            {i > 0 && <ToolDivider />}
            {group.map((name) => (
              <Tool key={name} name={name} pressed={tool === name} onClick={() => setTool(name)} />
            ))}
          </React.Fragment>
        ))}
        <MiniRow>
          <Svg w={12} h={12}>
            <path d="M4.500 4.500h6v6h-6z" fill="#fff" stroke="#777" />
            <path d="M1 1h6v6H1z" fill="#111" />
          </Svg>
          <Svg w={12} h={12}>
            <path d="M3 3.500h3c2 0 3 1 3 5" />
            <path d="M4 1v5L0 3.500zM6 8h6l-2.500 3z" fill="#333" stroke="none" />
          </Svg>
        </MiniRow>
        <SwatchPair $step={10} $overlap={12}>
          <Swatch $front $color="#000" $edge="#bbb" aria-label="Основной цвет" />
          <Swatch $color="#fff" aria-label="Фоновый цвет" />
        </SwatchPair>
        <ModeButtons>
          <ToolButton aria-label="Быстрая маска">
            <Svg w={18} h={14}>
              <rect x="1.500" y="1.500" width="15" height="11" fill="#fff" stroke="#333" />
              <circle cx="9" cy="7" r="3.500" fill="#eee" stroke="#444" />
            </Svg>
          </ToolButton>
          <ToolButton aria-label="Режим экрана">
            <Svg w={24} h={18}>
              <rect x="8.500" y="2.500" width="9" height="6" rx="1" fill="#eee" stroke="#666" />
              <rect x="3.500" y="7.500" width="9" height="6" rx="1" fill="url(#metal)" stroke="#666" />
              <path d="M23 14v4h-4z" fill="#111" stroke="none" />
            </Svg>
          </ToolButton>
        </ModeButtons>
      </ToolPanel>
    </Toolbox>
  );
};

/* ruler scale: 50 mm is about 47.3 px */
const ticks = (count) => Array.from({ length: count }, (_, i) => Math.round(i * 9.46) + 0.5);

const Document = () => (
  <DocWindow>
    <DocTitleBar>
      <PsDocIcon />
      <Title as="h2">Безимени-1 @ 33,3% (RGB/8)</Title>
      <WindowControls />
    </DocTitleBar>
    <DocGrid>
      <Svg w={17} h={17}>
        <path d="M1 12.500h16M12.500 1v16" stroke="#000" strokeDasharray="1 1" />
        <path d="M0 16.500h17M16.500 0v17" stroke="#000" />
      </Svg>
      <svg width="100%" height="17" fill="none" stroke="#000">
        {ticks(35).map((x, i) => (
          <path key={x} d={`M${x} ${i % 5 ? 13 : 0}V17`} />
        ))}
        {[0, 50, 100, 150, 200, 250, 300].map((n) => (
          <text key={n} x={n * 0.946 + 2} y="10" fontSize="9" fill="#000" stroke="none">{n}</text>
        ))}
        <path d="M165.500 0V16" strokeDasharray="1 1" />
        <path d="M0 16.500h400" />
      </svg>
      <DocScroll>
        <ScrollButton aria-label="Вверх"><ScrollArrow d={up} /></ScrollButton>
        <ScrollButton aria-label="Вниз"><ScrollArrow d={down} /></ScrollButton>
      </DocScroll>
      <svg width="17" height="196" fill="none" stroke="#000">
        {ticks(21).map((y, i) => (
          <path key={y} d={`M${i % 5 ? 13 : 0} ${y}H17`} />
        ))}
        {["0", "50", "100", "150"].map((n, k) =>
          n.split("").map((c, i) => (
            <text key={n + i} x="1" y={k * 47.3 + 11 + i * 10} fontSize="9" fill="#000" stroke="none">{c}</text>
          ))
        )}
        <path d="M1 37.500h15" strokeDasharray="1 1" />
        <path d="M1 195.500c0-3 4-3 4 0" />
        <path d="M16.500 0v196" />
      </svg>
      <Artboard>
        <svg width="100%" height="196" fill="none">
          <path d="M142.500 58.500h119v90h-119z" stroke="#000" strokeDasharray="4 4" />
          <path d="M159 37.500h13M165.500 31v13M169 43.500h5" stroke="#666" />
        </svg>
      </Artboard>
      <DocStatus>
        <Zoom defaultValue="33,33 %" aria-label="Масштаб" />
        <StatusButton aria-label="Сведения о документе">
          <Svg w={12} h={12}>
            <circle cx="6" cy="6" r="5.500" fill="#aaa" stroke="#777" />
            <path d="M3.500 3.500h3l3 3v2h-6z" fill="#eee" stroke="#444" />
          </Svg>
        </StatusButton>
        <ScrollRow>
          <ScrollButton $wide aria-label="Влево"><ScrollArrow d="M7 1L3 5l4 4" /></ScrollButton>
          <ScrollButton $wide aria-label="Вправо"><ScrollArrow d="M3 1l4 4-4 4" /></ScrollButton>
        </ScrollRow>
      </DocStatus>
      <Svg w={15} h={15}>
        <path d="M0 0h15v15H0z" fill="#ededed" stroke="none" />
        <path d="M4 12l8-8M8 12l4-4" stroke="#999" />
      </Svg>
    </DocGrid>
  </DocWindow>
);

const CollapsedDock = () => (
  <IconDock>
    <DockHeader><DockGrip /><DoubleArrow left /></DockHeader>
    {[["history", "actions"], ["presets"], ["brushes", "clone"], ["comps"]].map((group) => (
      <IconGroup key={group[0]}>
        <StripHandle />
        {group.map((name) => (
          <DockButton key={name} aria-label={name}>
            <Svg w={18} h={18}>{dockIcons[name]}</Svg>
          </DockButton>
        ))}
      </IconGroup>
    ))}
  </IconDock>
);

const Readings = ({ rows }) =>
  rows.map(([key, value]) => (
    <React.Fragment key={key}>
      <InfoKey>{key}:</InfoKey>
      <InfoValue>{value}</InfoValue>
    </React.Fragment>
  ));

const InfoPanel = () => (
  <Panel>
    <Tabs names={["Навигатор", "Гистограмма", "Инфо"]} active="Инфо" />
    <InfoBody>
      <InfoPair $height={82}>
        <InfoCell>
          <InfoIcon $row={2}><Dropper /></InfoIcon>
          <Readings rows={[["K", "0%"]]} />
          <InfoDepth>8-бит</InfoDepth>
        </InfoCell>
        <InfoCell>
          <InfoIcon $row={2}><Dropper /></InfoIcon>
          <Readings rows={[["C", "0%"], ["M", "0%"], ["Y", "0%"], ["K", "0%"]]} />
          <InfoDepth>8-бит</InfoDepth>
        </InfoCell>
      </InfoPair>
      <Rule />
      <InfoPair $height={33}>
        <InfoCell>
          <InfoIcon $row={1}>
            <Svg w={12} h={12}>
              <path d="M5.500 1v9M1 5.500h9" stroke="#000" />
              <path d="M11 9v3H8z" fill="#000" stroke="none" />
            </Svg>
          </InfoIcon>
          <Readings rows={[["X", "174,4"], ["Y", "39,0"]]} />
        </InfoCell>
        <InfoCell>
          <InfoIcon $row={1}>
            <Svg w={12} h={12}>
              <path d="M1.500 11V2.500H10M8 .5l2 2-2 2M0 9l1.500 2L3 9" stroke="#333" />
              <path d="M9.500 3v7h-7" stroke="#333" strokeDasharray="1 1" />
            </Svg>
          </InfoIcon>
          <Readings rows={[["Ш", "126,3"], ["В", "95,3"]]} />
        </InfoCell>
      </InfoPair>
      <Rule />
      <InfoText $top={10}>Док: 1,64M/0 байт</InfoText>
      <Rule />
      <InfoText $top={8}>Выделение области от центра или вычитание из имеющейся области.</InfoText>
    </InfoBody>
  </Panel>
);

const ColorPanel = () => (
  <Panel>
    <Tabs names={["Цвет", "Образцы", "Стили"]} active="Цвет" />
    <ColorBody>
      <ColorTop>
        <ColorSwatches $step={12} $overlap={8}>
          <Swatch $front $color="#000" $edge="#000" aria-label="Основной цвет" />
          <Swatch $color="#fff" aria-label="Фоновый цвет" />
        </ColorSwatches>
        <SliderList>
          {[["R", "#f00"], ["G", "#0f0"], ["B", "#00f"]].map(([name, hue]) => (
            <SliderRow key={name}>
              <label htmlFor={"slider" + name}>{name}</label>
              <Slider id={"slider" + name} type="range" max="255" defaultValue="0" $hue={hue} />
              <Field defaultValue="0" aria-label={name} $width={36} $height={22} />
            </SliderRow>
          ))}
        </SliderList>
      </ColorTop>
      <Spectrum>
        <Hues />
        <BlackWhite />
      </Spectrum>
    </ColorBody>
  </Panel>
);

const PercentField = ({ id, label }) => (
  <Cluster>
    <FieldLabel htmlFor={id} $off>{label}</FieldLabel>
    <Percent>
      <PercentInput id={id} defaultValue="100%" disabled />
      <PercentButton aria-label={label}>
        <Svg w={6} h={8}><path d="M1 0v8l4-4z" fill="#c4c2ba" stroke="none" /></Svg>
      </PercentButton>
    </Percent>
  </Cluster>
);

const Padlock = ({ body, face = "#888" }) => (
  <Svg w={12} h={12}>
    <path d="M3.500 6V4c0-4 5-4 5 0v2" stroke={body} strokeWidth="2" />
    <path d="M1.500 5.500h9v5h-9z" fill={face} stroke={body} />
    <path d="M3 8.500h6" stroke={body} />
  </Svg>
);

const LayersPanel = () => (
  <Panel $grow>
    <Tabs names={["Слои", "Каналы"]} active="Слои" />
    <LayersBody>
      <LayerOptions>
        <Select width={163} label="Режим наложения" options={["Нормальный"]} disabled="all" large />
        <PercentField id="opacity" label="Непрозр.:" />
      </LayerOptions>
      <Rule $inset={1} />
      <LayerOptions>
        <LockGroup>
          <FieldLabel as="span" $off>Закрепить:</FieldLabel>
          <button aria-label="Прозрачность">
            <Svg w={13} h={13}>
              <rect x="1" y="1" width="11" height="11" fill="#fff" stroke="#888" />
              <path d="M2 2h3v3H2zM8 2h3v3H8zM5 5h3v3H5zM2 8h3v3H2zM8 8h3v3H8z" fill="#ccc" stroke="none" />
            </Svg>
          </button>
          <button aria-label="Цвета">
            <Svg w={14} h={13}>
              <path d="M7 6l5-5 1 1-4 6z" fill="#ccc" stroke="#666" />
              <path d="M1 12c2 0 1-4 4-5 3 0 3 2 2 3s-4 3-6 2z" fill="#888" stroke="#666" />
            </Svg>
          </button>
          <button aria-label="Положение">
            <Svg w={13} h={13}>
              <path d="M6.500 1v11M1 6.500h11M4.500 3l2-2 2 2M4.500 10l2 2 2-2M3 4.500l-2 2 2 2M10 4.500l2 2-2 2" stroke="#555" />
            </Svg>
          </button>
          <button aria-label="Закрепить все"><Padlock body="#666" /></button>
        </LockGroup>
        <PercentField id="fill" label="Заливка:" />
      </LayerOptions>
      <LayerArea>
        <LayerList>
          <Layer>
            <EyeCell aria-label="Видимость">
              <Svg w={14} h={12}>
                <path d="M1 6c3-5 9-5 12 0-3 4-9 4-12 0z" fill="#fff" stroke="#222" />
                <path d="M1 3c4-3 8-3 12 0" stroke="#444" />
                <circle cx="7" cy="6" r="2.500" fill="#111" />
              </Svg>
            </EyeCell>
            <Thumb />
            <LayerName>Задний план</LayerName>
            <Padlock body="#111" face="#ddd" />
          </Layer>
        </LayerList>
        <ScrollColumn>
          <ScrollButton aria-label="Вверх"><ScrollArrow d={up} /></ScrollButton>
          <ScrollButton aria-label="Вниз"><ScrollArrow d={down} /></ScrollButton>
        </ScrollColumn>
      </LayerArea>
      <LayerFooter>
        <button aria-label="Связать слои">
          <Svg w={20} h={14}>
            <rect x="1.500" y="4.500" width="8" height="5" rx="2.500" stroke="#777" strokeWidth="2" />
            <rect x="10.500" y="4.500" width="8" height="5" rx="2.500" stroke="#777" strokeWidth="2" />
            <path d="M6 7h8" stroke="#999" />
          </Svg>
        </button>
        <button aria-label="Стиль слоя">
          <Svg w={20} h={14}>
            <text x="1" y="11" fontFamily="Liberation Serif" fontStyle="italic" fontWeight="bold" fontSize="14" fill="#777" stroke="none">fx</text>
            <path d="M16 11h3v2h-3z" fill="#999" stroke="none" />
          </Svg>
        </button>
        <button aria-label="Маска слоя">
          <Svg w={20} h={14}>
            <rect x="3.500" y="1.500" width="13" height="11" fill="#aaa" stroke="#777" />
            <circle cx="10" cy="7" r="3.500" fill="#fff" stroke="#777" />
          </Svg>
        </button>
        <button aria-label="Корректирующий слой">
          <Svg w={20} h={14}>
            <circle cx="9" cy="7" r="5" fill="#ccc" stroke="#333" />
            <path d="M5.500 10.500a5 5 0 0 1 7-7z" fill="#222" />
            <path d="M16 11h3l-1.500 2z" fill="#000" stroke="none" />
          </Svg>
        </button>
        <button aria-label="Новая группа">
          <Svg w={18} h={14}>
            <path d="M2.500 11.500v-8h4l1 1h5v7z" fill="url(#metal)" stroke="#444" />
          </Svg>
        </button>
        <button aria-label="Новый слой">
          <Svg w={19} h={14}>
            <path d="M3.500 2.500h9v9h-9z" fill="#fff" stroke="#777" />
            <path d="M12.500 2v9.500H3" stroke="#222" />
            <path d="M4.500 6.500h4v4z" fill="#444" />
          </Svg>
        </button>
        <button aria-label="Удалить слой">
          <Svg w={18} h={14}>
            <path d="M4.500 4.500l1 8h6l1-8zM3 3.500h11M6 2l5-.5" fill="#ddd" stroke="#777" />
            <path d="M7 5l.5 7M10 5l-.5 7" stroke="#777" />
          </Svg>
        </button>
      </LayerFooter>
    </LayersBody>
  </Panel>
);

const Glyph = ({ children, w = 18 }) => (
  <svg width={w} height="20" viewBox={`0 -1 ${w} 20`} fill="none" stroke="#222" aria-hidden="true">
    {children}
  </svg>
);

const bigT = { fontFamily: "Liberation Serif", fontWeight: "bold", fill: "#222", stroke: "none" };
const small = { fontSize: 10, fill: "#222", stroke: "none" };

const CharacterPanel = () => (
  <FloatingPanel>
    <Tabs names={["Символ", "Абзац"]} active="Символ" />
    <CharBody>
      <CharRow>
        <Select width={117} label="Гарнитура" options={["Times New Roman"]} />
        <Select width={74} label="Начертание" options={["Bold"]} />
      </CharRow>
      <Rule />
      <CharGrid>
        <CharIcon>
          <Glyph>
            <text x="0" y="15" {...bigT} fill="#888" fontSize="11">T</text>
            <text x="7" y="15" {...bigT} fontSize="17">T</text>
          </Glyph>
        </CharIcon>
        <Select width={75} label="Кегль" options={["14,95 мм"]} />
        <CharIcon>
          <Glyph>
            <text x="8" y="8" {...small} fontSize="9">A</text>
            <text x="8" y="17" {...small} fontSize="9">A</text>
            <path d="M4.500 8v8M2.500 10l2-2 2 2M2.500 14.500l2 2 2-2M7 9.500h9" />
          </Glyph>
        </CharIcon>
        <Select width={75} label="Интерлиньяж" options={["(Авто)"]} />
        <CharIcon>
          <Glyph>
            <text x="1" y="13" {...small}>A</text>
            <text x="10" y="13" {...small}>V</text>
            <path d="M7 14l4-11M6 2.500h5M7 1L5 2.500 7 4M7 15.500h5M11 14l2 1.500-2 1.500" />
          </Glyph>
        </CharIcon>
        <Select width={75} label="Кернинг" options={["Метричес"]} disabled />
        <CharIcon>
          <Glyph>
            <path d="M0 2h18v9H0z" fill="#aaa" stroke="none" />
            <text x="1" y="10" {...small}>A</text>
            <text x="10" y="10" {...small}>V</text>
            <path d="M1 14.500h15M3 12.500l-2 2 2 2M14 12.500l2 2-2 2" />
          </Glyph>
        </CharIcon>
        <Select width={75} label="Трекинг" options={["0"]} />
      </CharGrid>
      <Rule />
      <CharGrid>
        <CharIcon>
          <Glyph>
            <text x="5" y="15" {...bigT} fontSize="18">T</text>
            <path d="M3.500 3v12M1.500 5l2-2 2 2M1.500 13l2 2 2-2" />
          </Glyph>
        </CharIcon>
        <Field defaultValue="100%" aria-label="Масштаб по вертикали" />
        <CharIcon>
          <Glyph>
            <text x="3" y="13" {...bigT} fontSize="16">T</text>
            <path d="M1 15.500h15M3 13.500l-2 2 2 2M14 13.500l2 2-2 2" />
          </Glyph>
        </CharIcon>
        <Field defaultValue="100%" aria-label="Масштаб по горизонтали" />
        <CharIcon>
          <Glyph>
            <text x="2" y="12" {...small}>A</text>
            <text x="10" y="8" {...small} fontSize="9">a</text>
            <path d="M1 13.500h7M9 9.500h7M12.500 11v5M10.500 13l2-2 2 2" />
          </Glyph>
        </CharIcon>
        <Field defaultValue="0 мм" aria-label="Смещение базовой линии" />
        <ColorCell>
          <span id="text-color">Цвет:</span>
          <TextColor aria-labelledby="text-color" />
        </ColorCell>
      </CharGrid>
      <Rule />
      <StyleRow>
        <StyleButton>T</StyleButton>
        <StyleButton $italic $after={9}>T</StyleButton>
        <StyleButton>TT</StyleButton>
        <StyleButton>T<small>T</small></StyleButton>
        <StyleButton>T<sup>1</sup></StyleButton>
        <StyleButton $after={8}>T<sub>1</sub></StyleButton>
        <StyleButton $line="underline">T</StyleButton>
        <StyleButton $line="line-through">T</StyleButton>
      </StyleRow>
      <Rule />
      <CharRow $gap={4} $pad={2}>
        <Select width={109} label="Язык" options={["Русский"]} large />
        <AntiAlias htmlFor="aa">
          a<sub>a</sub>
        </AntiAlias>
        <Select id="aa" width={68} options={["Четк..."]} large />
      </CharRow>
    </CharBody>
  </FloatingPanel>
);

export default function App() {
  return (
    <Desktop>
      <GlobalStyle />
      <Metal />
      <Frame>
        <TitleBar>
          <PsIcon />
          <Title>Adobe Photoshop CS3 Extended</Title>
          <WindowControls />
        </TitleBar>
        <MenuBar>
          {menu.map((text) => (
            <MenuLabel key={text} text={text} />
          ))}
        </MenuBar>
        <Options />
        <Workspace>
          <ToolBar />
          <Document />
          <Spacer />
          <CollapsedDock />
          <PanelDock>
            <PanelDockHeader><DockGrip /><DoubleArrow /></PanelDockHeader>
            <InfoPanel />
            <ColorPanel />
            <LayersPanel />
            <Panel>
              <Tabs names={["Контуры"]} active="Контуры" restore />
              <PathsBody />
            </Panel>
          </PanelDock>
          <CharacterPanel />
        </Workspace>
      </Frame>
    </Desktop>
  );
}
